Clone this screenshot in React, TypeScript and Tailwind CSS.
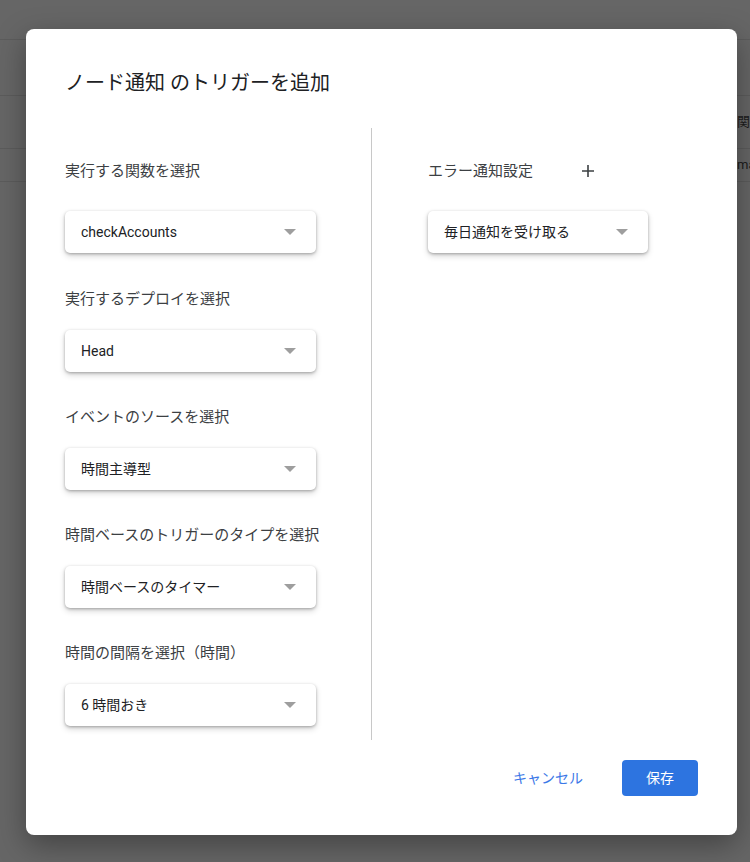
import React from "react";

const font = { fontFamily: 'Roboto, "Noto Sans CJK JP", sans-serif' };

interface Field {
    label: string;
    value: string;
}

const leftFields: Field[] = [
    { label: "実行する関数を選択", value: "checkAccounts" },
    { label: "実行するデプロイを選択", value: "Head" },
    { label: "イベントのソースを選択", value: "時間主導型" },
    { label: "時間ベースのトリガーのタイプを選択", value: "時間ベースのタイマー" },
    { label: "時間の間隔を選択（時間）", value: "6 時間おき" },
];

const Select = ({ value, width }: { value: string; width: string }) => (
    <div
        className={`${width} h-[42px] flex items-center justify-between pl-4 pr-5 bg-white rounded-[5px] shadow-[0_1px_3px_rgba(0,0,0,0.28),0_3px_6px_rgba(0,0,0,0.16)]`}
    >
        <span className="text-[14px] text-[#202124]">{value}</span>
        <span className="w-0 h-0 border-x-[6px] border-t-[6px] border-x-transparent border-t-[#9e9e9e]" />
    </div>
);

const App = () => {
    return (
        <div className="relative w-[750px] h-[862px] overflow-hidden bg-[#666666]" style={font}>
            {/* page behind the overlay */}
            <div className="flex flex-col">
                <div className="h-[40px] border-b border-[#5c5c5c]" />
                <div className="h-[56px] border-b border-[#5c5c5c]" />
                <div className="h-[53px] border-b border-[#5c5c5c] flex items-center pl-[737px]">
                    <span className="text-[13px] text-[#1c1c1c]">関</span>
                </div>
                <div className="h-[33px] border-b border-[#5c5c5c] flex items-center pl-[737px]">
                    <span className="text-[13px] text-[#1c1c1c]">ma</span>
                </div>
            </div>

            {/* dialog */}
            <div className="absolute left-[26px] top-[29px] w-[711px] h-[806px] bg-white rounded-[8px] shadow-[0_10px_30px_rgba(0,0,0,0.35)] flex flex-col">
                <h1 className="pl-[39px] pt-[40px] text-[20px] leading-[28px] font-normal text-[#202124]">
                    ノード通知 のトリガーを追加
                </h1>

                <div className="flex mt-[31px] h-[612px]">
                    <div className="w-[346px] pl-[39px] border-r border-[#c8c8c8] flex flex-col">
                        {leftFields.map((f, i) => (
                            <div
                                key={f.label}
                                className={`flex flex-col ${i === 0 ? "mt-[33px]" : i === 1 ? "mt-[36px]" : "mt-[35px]"}`}
                            >
                                <label
                                    className={`text-[15px] leading-[20px] text-[#3c4043] ${i === 0 ? "mb-[30px]" : "mb-[21px]"}`}
                                >
                                    {f.label}
                                </label>
                                <Select value={f.value} width="w-[251px]" />
                            </div>
                        ))}
                    </div>

                    <div className="pl-[56px] flex flex-col">
                        <div className="mt-[33px] flex items-center h-[20px]">
                            <span className="text-[15px] leading-[20px] text-[#3c4043]">エラー通知設定</span>
                            <svg className="ml-[48px]" width="14" height="14" viewBox="0 0 14 14">
                                <path d="M7 1v12M1 7h12" stroke="#3c4043" strokeWidth="1.6" />
                            </svg>
                        </div>
                        <div className="mt-[30px]">
                            <Select value="毎日通知を受け取る" width="w-[220px]" />
                        </div>
                    </div>
                </div>

                <div className="flex justify-end items-center pr-[39px] mt-[20px] gap-[39px]">
                    <button className="text-[14px] text-[#3b78e7]">キャンセル</button>
                    <button className="w-[76px] h-[36px] rounded-[4px] bg-[#2d74e0] text-white text-[14px]">
                        保存
                    </button>
                </div>
            </div>
        </div>
    );
};

export default App;
